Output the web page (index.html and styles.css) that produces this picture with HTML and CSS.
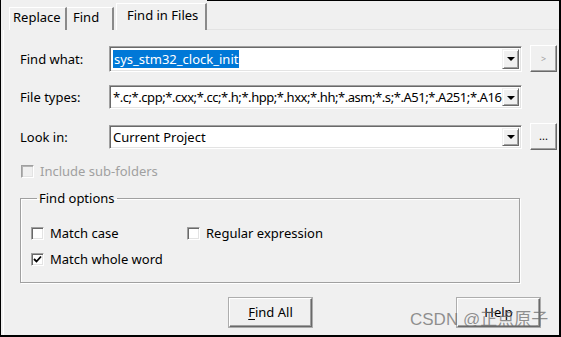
FILE: index.html
```html
<!DOCTYPE html>
<html>
<head>
<meta charset="utf-8">
<link rel="stylesheet" href="styles.css">
</head>
<body>
<div class="dialog">
  <div class="tabstrip">
    <div class="tab first">Replace</div>
    <div class="tab">Find</div>
    <div class="tab active">Find in Files</div>
    <div class="tabfill"></div>
  </div>
  <div class="panel">
    <div class="row row1">
      <div class="label">Find what:</div>
      <div class="combo tall">
        <div class="value"><span class="sel">sys_stm32_clock_init</span></div>
        <div class="drop"><span class="tri"></span></div>
      </div>
      <div class="sidebtn disabled">&gt;</div>
    </div>
    <div class="row row2">
      <div class="label">File types:</div>
      <div class="combo">
        <div class="value clip">*.c;*.cpp;*.cxx;*.cc;*.h;*.hpp;*.hxx;*.hh;*.asm;*.s;*.A51;*.A251;*.A166</div>
        <div class="drop"><span class="tri"></span></div>
      </div>
    </div>
    <div class="row row3">
      <div class="label">Look in:</div>
      <div class="combo">
        <div class="value">Current Project</div>
        <div class="drop"><span class="tri"></span></div>
      </div>
      <div class="sidebtn">...</div>
    </div>
    <div class="check disabled sub">
      <span class="box"></span><span>Include sub-folders</span>
    </div>
    <fieldset class="group">
      <legend>Find options</legend>
      <div class="optrow">
        <div class="check col1"><span class="box"></span><span>Match case</span></div>
        <div class="check"><span class="box"></span><span>Regular expression</span></div>
      </div>
      <div class="optrow">
        <div class="check col1"><span class="box checked"><svg viewBox="0 0 9 9" width="9" height="9"><path d="M1 4 L3.5 6.5 L8 1.5" fill="none" stroke="#000" stroke-width="1.8"/></svg></span><span>Match whole word</span></div>
      </div>
    </fieldset>
    <div class="buttons">
      <div class="btn findall"><u>F</u>ind All</div>
      <div class="btn help">Help</div>
    </div>
  </div>
  <div class="watermark">CSDN @正点原子</div>
</div>
</body>
</html>
```

FILE: styles.css
```css
html, body {
  margin: 0;
  padding: 0;
}
body {
  background: #f0f0f0;
  font-family: "Noto Sans", "Noto Sans CJK SC", sans-serif;
  font-size: 13px;
  color: #000;
}
.dialog {
  position: relative;
  width: 561px;
  height: 337px;
  box-sizing: border-box;
  border-left: 1px solid #000;
  border-right: 2px solid #000;
  border-bottom: 2px solid #000;
  display: flex;
  flex-direction: column;
  overflow: hidden;
}
.tabstrip {
  display: flex;
  align-items: flex-end;
  height: 30px;
  padding-left: 8px;
  flex: none;
}
.tab {
  height: 23px;
  box-sizing: border-box;
  padding: 0 6px 0 3px;
  border-top: 1px solid #fff;
  border-left: 1px solid #fff;
  border-right: 2px solid #8a8a8a;
  line-height: 19px;
  background: #f0f0f0;
}
.tab.first {
  padding-left: 3px;
  width: 58px;
}
.tab:nth-child(2) {
  width: 47px;
  padding-left: 6px;
  border-left: none;
}
.tab.active {
  height: 27px;
  width: 91px;
  margin-left: 2px;
  padding: 1px 0 0 10px;
  line-height: 20px;
}
.tabfill {
  flex: 1;
  align-self: stretch;
  border-top: 1px solid #000;
  border-bottom: 1px solid #e3e3e3;
}
.panel {
  flex: 1;
  border-left: 1px solid #fff;
  margin-left: 2px;
  padding: 15px 0 0 16px;
  display: flex;
  flex-direction: column;
}
.row {
  display: flex;
  align-items: center;
}
.row2 { margin-top: 13px; }
.row3 { margin-top: 14px; }
.label {
  width: 89px;
  flex: none;
}
.combo {
  width: 413px;
  height: 24px;
  box-sizing: border-box;
  display: flex;
  background: #fff;
  border-top: 1px solid #a0a0a0;
  border-left: 1px solid #a0a0a0;
  border-right: 1px solid #fff;
  border-bottom: 1px solid #fff;
  box-shadow: inset 1px 1px 0 #696969, inset -1px -1px 0 #e3e3e3;
  padding: 2px;
}
.combo.tall {
  height: 26px;
}
.value {
  flex: 1;
  padding-left: 1px;
  line-height: 18px;
  white-space: nowrap;
  overflow: hidden;
}
.value.clip {
  letter-spacing: -0.45px;
}
.tall .value { line-height: 20px; }
.sel {
  background: #0078d7;
  color: #fff;
  padding: 0 1px;
}
.drop {
  width: 17px;
  flex: none;
  background: #f0f0f0;
  box-sizing: border-box;
  border-top: 1px solid #f0f0f0;
  border-left: 1px solid #f0f0f0;
  border-right: 1px solid #696969;
  border-bottom: 1px solid #696969;
  box-shadow: inset 1px 1px 0 #fff, inset -1px -1px 0 #a0a0a0;
  display: flex;
  align-items: center;
  justify-content: center;
}
.tri {
  width: 0;
  height: 0;
  border-left: 4px solid transparent;
  border-right: 4px solid transparent;
  border-top: 4px solid #000;
  margin-top: 1px;
}
.sidebtn {
  margin-left: 8px;
  width: 27px;
  height: 27px;
  box-sizing: border-box;
  border-top: 1px solid #fff;
  border-left: 1px solid #fff;
  border-right: 1px solid #696969;
  border-bottom: 1px solid #696969;
  box-shadow: inset -1px -1px 0 #a0a0a0;
  display: flex;
  align-items: center;
  justify-content: center;
  font-size: 11px;
  line-height: 1;
  padding-bottom: 3px;
}
.sidebtn.disabled {
  color: #a0a0a0;
  font-size: 9px;
  padding-bottom: 0;
}
.check {
  display: flex;
  align-items: center;
  gap: 6px;
  height: 16px;
}
.check .box {
  width: 13px;
  height: 13px;
  box-sizing: border-box;
  background: #fff;
  border-top: 1px solid #a0a0a0;
  border-left: 1px solid #a0a0a0;
  border-right: 1px solid #fff;
  border-bottom: 1px solid #fff;
  box-shadow: inset 1px 1px 0 #696969, inset -1px -1px 0 #e3e3e3;
  display: flex;
  align-items: center;
  justify-content: center;
  flex: none;
}
.check.disabled { color: #a0a0a0; }
.check.disabled .box {
  background: #f0f0f0;
  box-shadow: inset 1px 1px 0 #b4b4b4, inset -1px -1px 0 #e3e3e3;
}
.sub {
  margin-top: 13px;
  margin-left: 1px;
}
.group {
  margin: 12px 0 0 0;
  width: 500px;
  box-sizing: border-box;
  height: 92px;
  border: 1px solid #a0a0a0;
  box-shadow: inset 1px 1px 0 #fff, 1px 1px 0 #fff;
  padding: 20px 0 0 10px;
}
.group legend {
  padding: 0 2px;
  margin-left: 6px;
  line-height: 14px;
}
.optrow {
  display: flex;
  margin-bottom: 10px;
}
.col1 { width: 156px; }
.buttons {
  display: flex;
  margin-top: 15px;
  padding-left: 209px;
}
.btn {
  width: 83px;
  height: 29px;
  box-sizing: border-box;
  border-top: 1px solid #fff;
  border-left: 1px solid #fff;
  border-right: 1px solid #696969;
  border-bottom: 1px solid #696969;
  box-shadow: inset -1px -1px 0 #a0a0a0, 0 0 0 1px #adadad;
  display: flex;
  align-items: center;
  justify-content: center;
  padding-bottom: 2px;
}
.btn u { text-decoration: underline; text-underline-offset: 2px; }
.help {
  margin-left: 145px;
}
.watermark {
  position: absolute;
  left: 409px;
  top: 305px;
  font-size: 17px;
  color: rgba(110, 110, 110, 0.75);
  font-family: "Liberation Sans", "Noto Sans CJK SC", sans-serif;
  white-space: nowrap;
}
```
